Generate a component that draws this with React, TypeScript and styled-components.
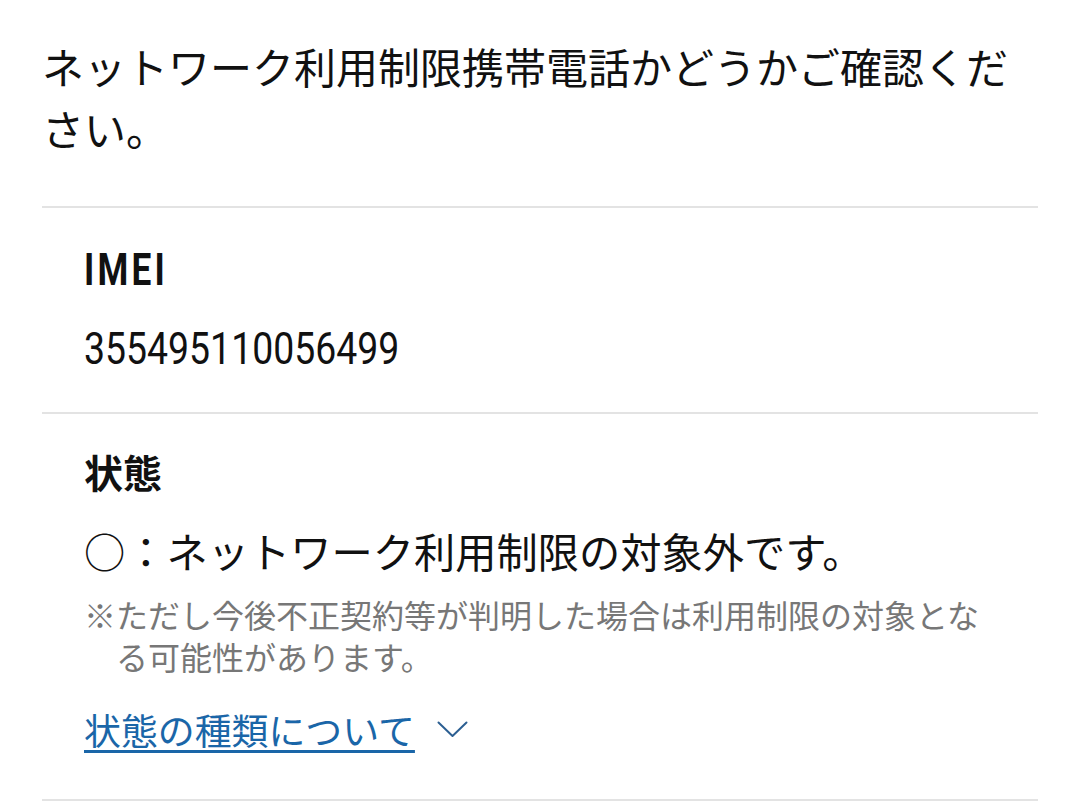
import React from 'react';
import styled, { createGlobalStyle } from 'styled-components';

const GlobalStyle = createGlobalStyle`
	html, body {
		margin: 0;
		padding: 0;
		background: #fff;
	}
	body {
		font-family: 'Noto Sans CJK JP', 'Noto Sans', sans-serif;
		color: #111;
	}
`;

const Page = styled.div`
	padding: 0 42px;
`;

const Lead = styled.p`
	margin: 0;
	padding: 35px 0 47px;
	font-size: 42px;
	line-height: 62px;
	color: #111;
`;

const Section = styled.section<{ $top: number; $bottom: number }>`
	border-top: 2px solid #e3e3e3;
	padding: ${(p) => `${p.$top}px 42px ${p.$bottom}px`};
	&:last-child {
		border-bottom: 2px solid #e3e3e3;
	}
`;

const Narrow = styled.div<{ $bold?: boolean }>`
	font-family: 'Roboto', 'Liberation Sans', sans-serif;
	font-size: 44px;
	line-height: 64px;
	font-weight: ${(p) => (p.$bold ? 700 : 400)};
	letter-spacing: ${(p) => (p.$bold ? '4px' : '0')};
	transform: scaleX(${(p) => (p.$bold ? 0.8 : 0.85)});
	transform-origin: left center;
	color: #111;
`;

const ValueGap = styled.div`
	height: 15px;
`;

const Label = styled.h3`
	margin: 0;
	font-size: 39px;
	line-height: 64px;
	font-weight: 700;
	color: #111;
`;

const Status = styled.p`
	margin: 16px 0 0;
	font-size: 41.25px;
	line-height: 62px;
	color: #111;
`;

const Note = styled.p`
	margin: 12px 0 0;
	padding-left: 1em;
	text-indent: -1em;
	font-size: 32px;
	line-height: 42px;
	color: #777;
`;

const Toggle = styled.div`
	display: flex;
	align-items: center;
	gap: 22px;
	margin-top: 24px;
	height: 56px;
`;

const Link = styled.a`
	font-size: 36.9px;
	line-height: 56px;
	color: #1a66a8;
	text-decoration: underline;
	text-decoration-thickness: 3px;
	text-underline-offset: 5px;
	cursor: pointer;
`;

const Chevron = () => (
	<svg width="31" height="17" viewBox="0 0 31 17" fill="none">
		<polyline points="1.5,1.5 15.5,15 29.5,1.5" stroke="#2c5f92" strokeWidth="2" strokeLinecap="round" strokeLinejoin="round" />
	</svg>
);

const App = () => {
	return (
		<Page>
			<GlobalStyle />
			<Lead>ネットワーク利用制限携帯電話かどうかご確認ください。</Lead>
			<Section $top={30} $bottom={31}>
				<Narrow $bold>IMEI</Narrow>
				<ValueGap />
				<Narrow>355495110056499</Narrow>
			</Section>
			<Section $top={25} $bottom={42}>
				<Label>状態</Label>
				<Status>○：ネットワーク利用制限の対象外です。</Status>
				<Note>※ただし今後不正契約等が判明した場合は利用制限の対象となる可能性があります。</Note>
				<Toggle>
					<Link>状態の種類について</Link>
					<Chevron />
				</Toggle>
			</Section>
		</Page>
	);
};

export default App;
